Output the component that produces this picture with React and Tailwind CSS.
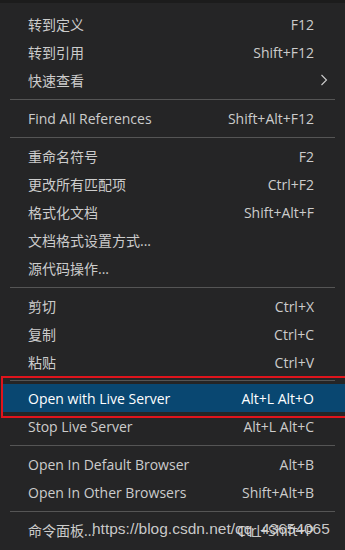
import React from "react";

const font = { fontFamily: '"Open Sans", "Noto Sans CJK SC", sans-serif' };

function Item({ label, shortcut, chevron, active }) {
  return (
    <div
      className={
        "flex h-[28px] items-center justify-between pr-[31px] text-[14px] " +
        (active ? "ml-[3px] bg-[#094771] pl-[25px] text-white" : "pl-[28px] text-[#cccccc]")
      }
    >
      <span>{label}</span>
      {shortcut && <span>{shortcut}</span>}
      {chevron && (
        <svg width="8" height="12" viewBox="0 0 8 12" className="mr-[-14px]">
          <polyline points="1.5,1 6.5,6 1.5,11" fill="none" stroke="#cccccc" strokeWidth="1.1" />
        </svg>
      )}
    </div>
  );
}

function Sep({ h = "h-[10px]" }) {
  return (
    <div className={"flex items-center px-[10px] " + h}>
      <div className="h-px w-full bg-[#555555]" />
    </div>
  );
}

export default function App() {
  return (
    <div className="relative h-[550px] w-[345px] overflow-hidden bg-[#252526]" style={font}>
      <div className="h-[3px] bg-[#1c1c1c]" />
      <div className="pt-[7px]">
        <Item label="转到定义" shortcut="F12" />
        <Item label="转到引用" shortcut="Shift+F12" />
        <Item label="快速查看" chevron />
        <Sep />
        <Item label="Find All References" shortcut="Shift+Alt+F12" />
        <Sep />
        <Item label="重命名符号" shortcut="F2" />
        <Item label="更改所有匹配项" shortcut="Ctrl+F2" />
        <Item label="格式化文档" shortcut="Shift+Alt+F" />
        <Item label="文档格式设置方式..." />
        <Item label="源代码操作..." />
        <Sep />
        <Item label="剪切" shortcut="Ctrl+X" />
        <Item label="复制" shortcut="Ctrl+C" />
        <Item label="粘贴" shortcut="Ctrl+V" />
        <Sep h="h-[8px]" />
        <Item label="Open with Live Server" shortcut="Alt+L Alt+O" active />
        <Item label="Stop Live Server" shortcut="Alt+L Alt+C" />
        <Sep />
        <Item label="Open In Default Browser" shortcut="Alt+B" />
        <Item label="Open In Other Browsers" shortcut="Shift+Alt+B" />
        <Sep />
        <Item label="命令面板..." shortcut="Ctrl+Shift+P" />
      </div>
      <div className="pointer-events-none absolute left-[1px] right-[-2px] top-[376px] h-[42px] border-2 border-[#e0141c]" />
      <div
        className="pointer-events-none absolute left-[92px] top-[519px] text-[15.5px] leading-[20px] text-[#dedede]/90"
        style={{ fontFamily: '"Liberation Sans", Arial, sans-serif' }}
      >
        https://blog.csdn.net/qq_43654065
      </div>
    </div>
  );
}
